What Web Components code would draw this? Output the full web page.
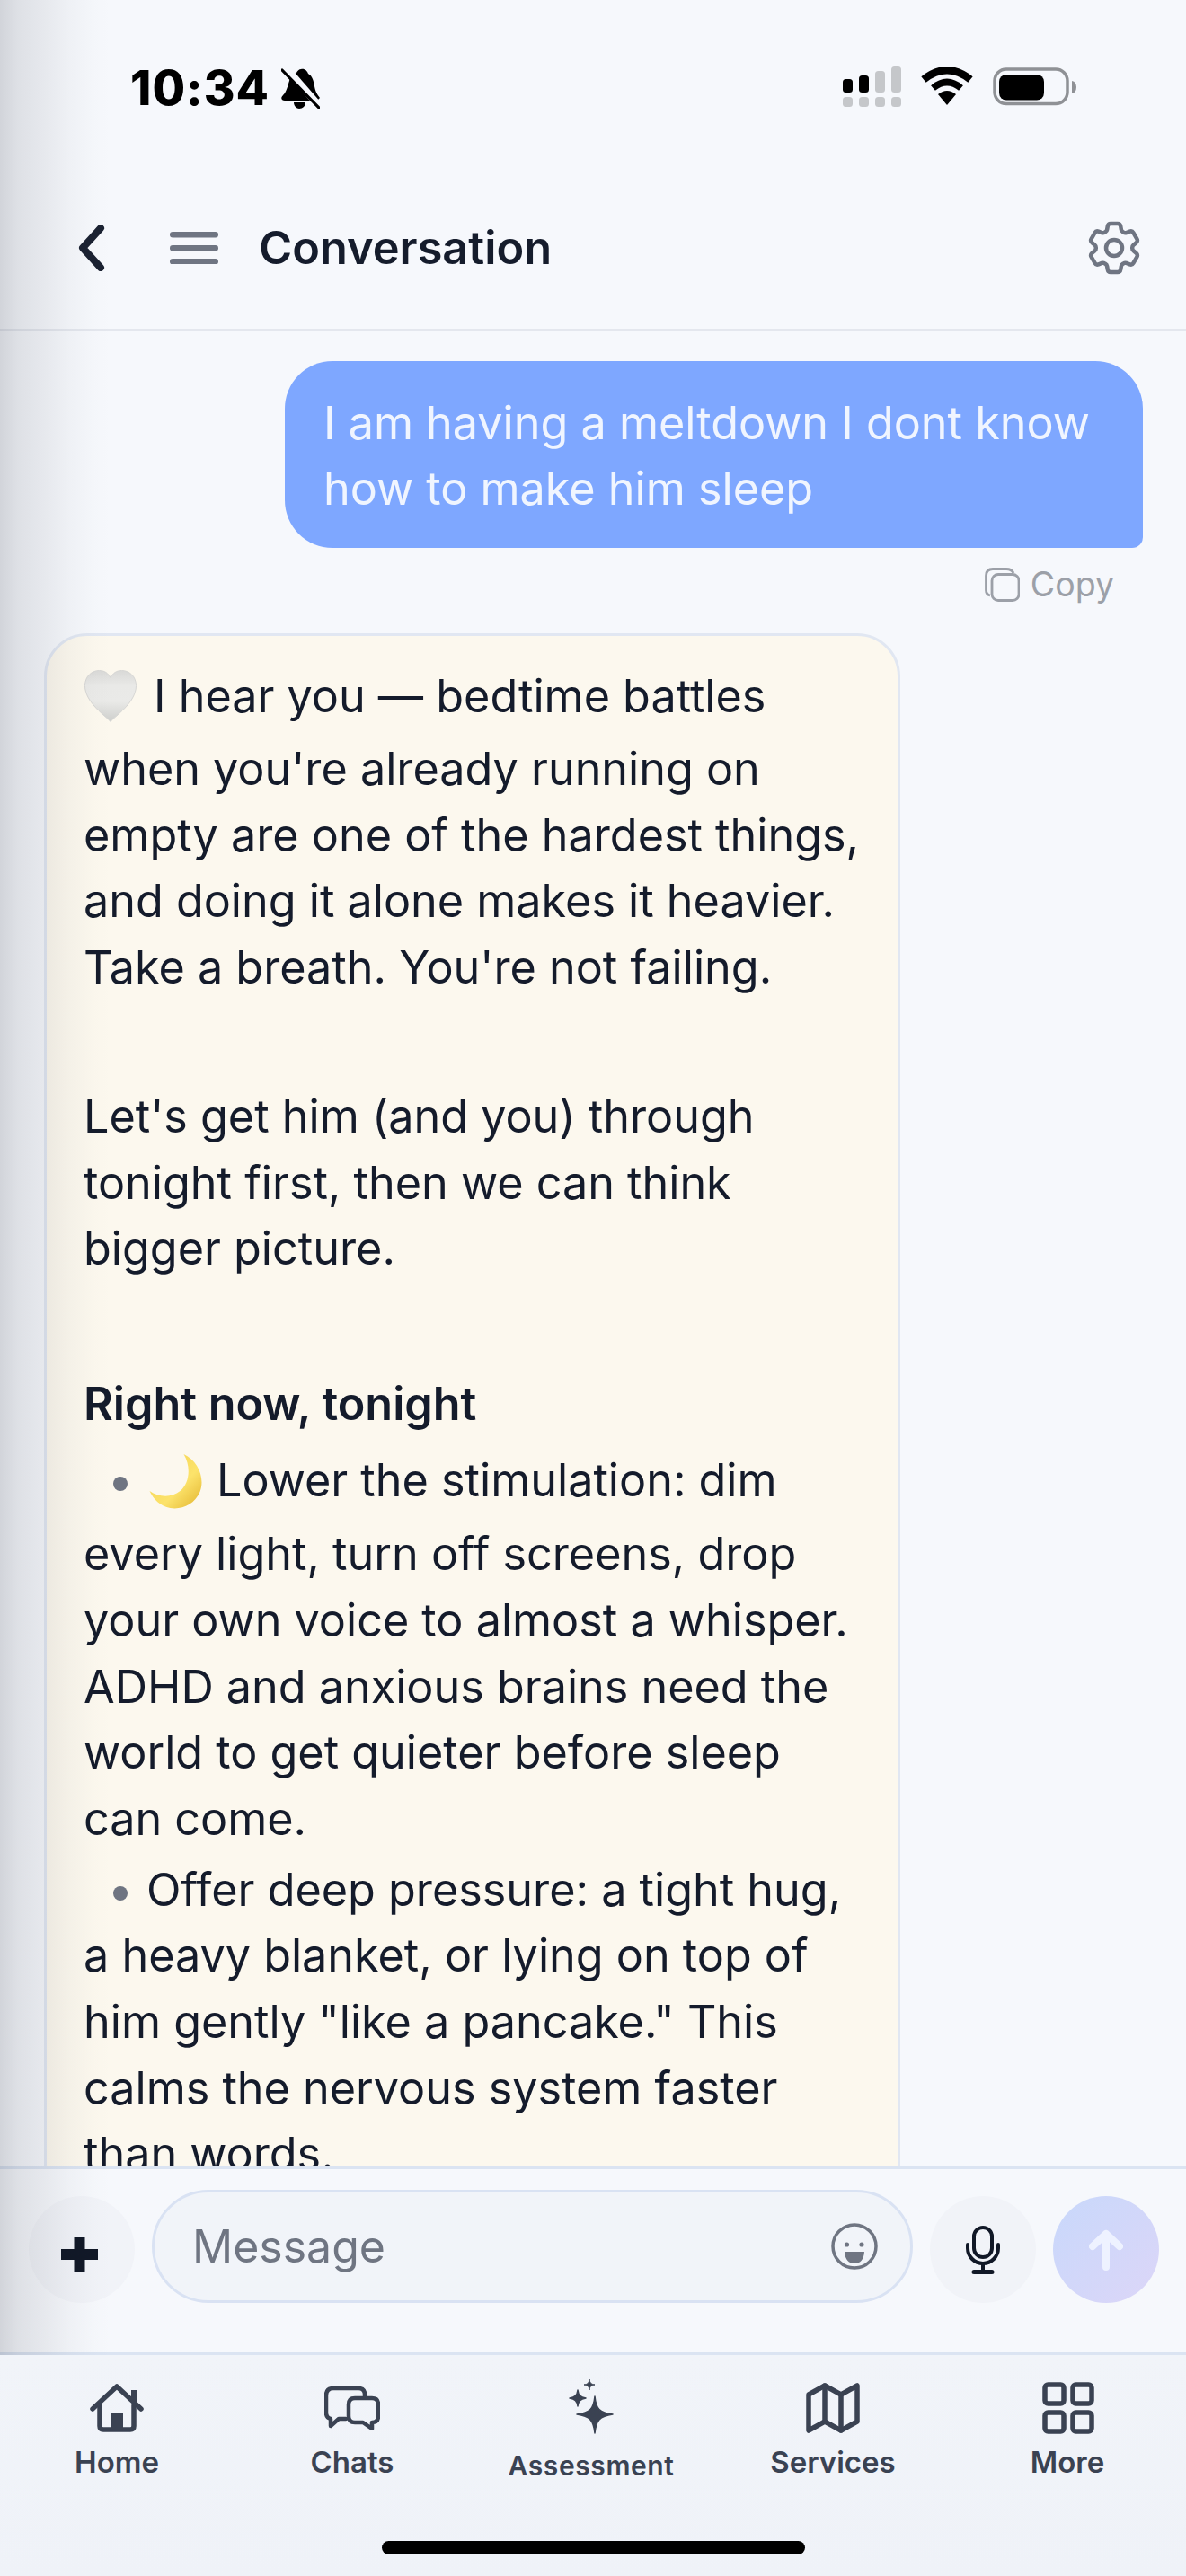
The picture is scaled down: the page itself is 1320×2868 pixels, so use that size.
<!DOCTYPE html>
<html lang="en">
<head>
<meta charset="utf-8">
<title>Conversation</title>
<style>
  html, body { margin: 0; padding: 0; background: #f6f8fc; }
  body { font-family: Inter, "Noto Sans", sans-serif; }
</style>
</head>
<body>
<app-shell>
  <status-bar></status-bar>
  <chat-header heading="Conversation"></chat-header>
  <chat-thread>
    <user-message>I am having a meltdown I dont know how to make him sleep</user-message>
    <copy-action></copy-action>
    <assistant-message>
      <msg-para class="lead"><svg class="emoji" width="58" height="58" viewBox="-.5 -.5 58 58" style="vertical-align:-26px;margin-bottom:15px;margin-left:1px;margin-right:19px"><defs><linearGradient id="hg" x1="0" y1="0" x2="0" y2="1"><stop offset="0" stop-color="#d9d9d7"/><stop offset=".3" stop-color="#e9e9e7"/><stop offset=".6" stop-color="#eaeae8"/><stop offset="1" stop-color="#cdcecb"/></linearGradient></defs><path d="M28.500 57C25 52 0 36 0 17C0 6 8 0 16 0C22 0 26 3 28.500 8C31 3 35 0 41 0C49 0 57 6 57 17C57 36 32 52 28.500 57Z" fill="url(#hg)" stroke="#d6d6d4" stroke-width="1"/></svg>I hear you — bedtime battles when you're already running on empty are one of the hardest things, and doing it alone makes it heavier. Take a breath. You're not failing.</msg-para>
      <msg-para style="margin-top:92px">Let's get him (and you) through tonight first, then we can think bigger picture.</msg-para>
      <msg-para style="margin-top:99px"><b>Right now, tonight</b></msg-para>
      <msg-item style="margin-top:11.500px"><svg width="60" height="61" viewBox="0 0 59 61" style="vertical-align:-27px;margin-bottom:13.500px;margin-left:3px;margin-right:15px"><defs><linearGradient id="mg" x1="0" y1="0" x2="1" y2="1"><stop offset="0" stop-color="#f3d04e"/><stop offset=".6" stop-color="#fce36b"/><stop offset="1" stop-color="#e2b32c"/></linearGradient></defs><path d="M38 0C54 7 62 27 56 42C50 56 36 62 23 60C12 58 4 50 0 41C10 48 24 49 34 41C45 32 46 13 38 0Z" fill="url(#mg)"/></svg>Lower the stimulation: dim every light, turn off screens, drop your own voice to almost a whisper. ADHD and anxious brains need the world to get quieter before sleep can come.</msg-item>
      <msg-item style="margin-top:5px">Offer deep pressure: a tight hug, a heavy blanket, or lying on top of him gently "like a pancake." This calms the nervous system faster than words.</msg-item>
    </assistant-message>
  </chat-thread>
  <message-composer></message-composer>
  <tab-bar>
    <tab-item label="Home"><svg width="60" height="54" viewBox="0 0 60 54" fill="none" stroke="#3a4252" stroke-width="5.500" stroke-linecap="round" stroke-linejoin="round"><path d="M3 28L30 3L57 28"/><path d="M49 7V20" stroke-width="6" stroke-linecap="butt"/><path d="M11 24V47Q11 51 15 51H45Q49 51 49 47V24"/><rect x="23" y="33" width="14" height="18" fill="#3a4252" stroke="none"/></svg></tab-item>
    <tab-item label="Chats"><svg width="62" height="49" viewBox="0 0 62 49" fill="none" stroke="#3a4252" stroke-width="4.500" stroke-linecap="round" stroke-linejoin="round"><path d="M45 11V9Q45 2 38 2H10Q2 2 2 10V29Q2 35 7 36V44L16 36H24"/><path d="M34 13H53Q60 13 60 20V33Q60 40 53 40V47L43 40H34Q27 40 27 33V20Q27 13 34 13Z"/></svg></tab-item>
    <tab-item label="Assessment" class="alt"><svg width="50" height="62" viewBox="0 0 50 62" fill="#3a4252" stroke="#3a4252" stroke-width="1.500" stroke-linejoin="round"><path d="M29 20C30.500 34 34 38 49 40C34 42 30.500 47 29 61C27.500 47 24 42 9 40C24 38 27.500 34 29 20Z"/><path d="M10 13C10.800 19 13 21 19 22C13 23 10.800 25 10 31C9.200 25 7 23 1 22C7 21 9.200 19 10 13Z" /><path d="M23 1C23.500 5 25 6.500 29 7C25 7.500 23.500 9 23 13C22.500 9 21 7.500 17 7C21 6.500 22.500 5 23 1Z" stroke-width="1"/></svg></tab-item>
    <tab-item label="Services"><svg width="60" height="56" viewBox="0 0 60 56" fill="none" stroke="#3a4252" stroke-width="5.500" stroke-linecap="round" stroke-linejoin="round"><path d="M3 13L21 3L39 13L57 3V43L39 53L21 43L3 53Z"/><path d="M21 3V43M39 13V53"/></svg></tab-item>
    <tab-item label="More"><svg width="58" height="58" viewBox="0 0 58 58" fill="none" stroke="#3a4252" stroke-width="5.500" stroke-linejoin="round" style="margin-left:2px"><rect x="3" y="3" width="21" height="21" rx="3.500"/><rect x="34" y="3" width="21" height="21" rx="3.500"/><rect x="3" y="34" width="21" height="21" rx="3.500"/><rect x="34" y="34" width="21" height="21" rx="3.500"/></svg></tab-item>
  </tab-bar>
</app-shell>
<script>
function define(name, css, html) {
  customElements.define(name, class extends HTMLElement {
    constructor() {
      super();
      const root = this.attachShadow({ mode: 'open' });
      const body = typeof html === 'function' ? html(this) : html;
      root.innerHTML = '<style>' + css + '</style>' + body;
    }
    connectedCallback() {
      if (typeof html === 'function') {
        const style = this.shadowRoot.querySelector('style').outerHTML;
        this.shadowRoot.innerHTML = style + html(this);
      }
    }
  });
}

define('app-shell', `
  :host { display:flex; flex-direction:column; position:relative; width:1320px; height:2868px; overflow:hidden;
          background:#f6f8fc; font-family:Inter,"Noto Sans",sans-serif; color:#141b2b; }
  .edge { position:absolute; left:0; top:0; width:125px; height:2622px; pointer-events:none;
          background:linear-gradient(90deg,rgba(20,25,40,.16) 0,rgba(20,25,40,.105) 20px,rgba(20,25,40,.07) 48px,rgba(20,25,40,.03) 78px,rgba(20,25,40,.008) 105px,rgba(20,25,40,0) 125px); }
`, `<slot></slot><div class="edge"></div>`);

define('status-bar', `
  :host { display:flex; align-items:flex-start; justify-content:space-between; height:189px; box-sizing:border-box; padding:74px 122px 0 145px; flex:none; }
  .left { display:flex; align-items:center; gap:13px; height:48px; }
  .time { font:800 53px/48px Inter,sans-serif; color:#000; letter-spacing:1px; }
  .right { display:flex; align-items:flex-start; gap:22px; }
  svg { display:block; }
`, `<div class="left"><span class="time">10:34</span>
  <svg width="43" height="45" viewBox="0 0 43 45"><path d="M22 1C26 0 29 3 30 6C35 9 36 14 37 20C38 26 40 29 43 33L40 36H4C0 36 -1 33 2 30C6 26 7 20 9 14C10 9 14 6 17 5C18 3 20 1 22 1Z" fill="#000"/><path d="M14 38H27C27 42 24 45 20 45C17 45 14 42 14 38Z" fill="#000"/><path d="M4 -2L44 44" stroke="#f6f8fc" stroke-width="8"/><path d="M1 2L42 44" stroke="#000" stroke-width="3.200" stroke-linecap="round"/></svg></div>
  <div class="right">
    <svg width="65" height="45" viewBox="0 0 65 45"><g fill="#000"><rect x="0" y="14" width="11" height="15" rx="3.500"/><rect x="18" y="10" width="11" height="19" rx="3.500"/></g><g fill="#c5c7ca"><rect x="36" y="5" width="11" height="24" rx="3.500"/><rect x="54" y="0" width="11" height="29" rx="3.500"/><rect x="0" y="34" width="11" height="11" rx="3.500"/><rect x="18" y="34" width="11" height="11" rx="3.500"/><rect x="36" y="34" width="11" height="11" rx="3.500"/><rect x="54" y="34" width="11" height="11" rx="3.500"/></g></svg>
    <svg width="58" height="43" viewBox="0 0 58 43" style="margin-top:1px"><path d="M29 42L19 30Q29 22 39 30Z" fill="#000"/><path d="M13.500 23Q29 10 44.500 23" fill="none" stroke="#000" stroke-width="7.500"/><path d="M3 13.500Q29 -7 55 13.500" fill="none" stroke="#000" stroke-width="8.500"/></svg>
    <svg width="93" height="43" viewBox="0 0 93 43" style="margin-top:1px"><rect x="2" y="2" width="81" height="38.500" rx="13" fill="none" stroke="#8f9195" stroke-width="3.500"/><rect x="7" y="8" width="50" height="28.500" rx="8" fill="#000"/><path d="M88 15Q93 16 93 22Q93 28 88 29Z" fill="#8f9195"/></svg>
  </div>`);

define('chat-header', `
  :host { display:flex; align-items:center; height:180px; box-sizing:border-box; flex:none; padding:0 44px 3px 87px; border-bottom:3px solid #e4e7ee; }
  h1 { margin:0 auto 0 45px; font:600 50.500px/60px Inter,sans-serif; color:#151c2c; }
  svg { display:block; flex:none; }
  .menu { margin-left:72px; }
`, el => `<svg width="30" height="52" viewBox="0 0 30 52" fill="none" stroke="#1b2232" stroke-width="8" stroke-linecap="round" stroke-linejoin="round"><path d="M25 4L5 26L25 48"/></svg>
  <svg class="menu" width="54" height="36" viewBox="0 0 54 36" fill="#6f7582"><rect y="0" width="54" height="6.500" rx="3.200"/><rect y="15" width="54" height="6.500" rx="3.200"/><rect y="30" width="54" height="6.500" rx="3.200"/></svg>
  <h1>${el.getAttribute('heading') || ''}</h1>
  <svg width="72" height="72" viewBox="0 0 24 24" fill="none" stroke="#6f7582" stroke-width="1.500" stroke-linejoin="round"><path d="M9.594 3.940c.09-.542.56-.94 1.110-.94h2.593c.55 0 1.020.398 1.110.94l.213 1.281c.063.374.313.686.645.870.074.040.147.083.22.127.325.196.72.257 1.075.124l1.217-.456a1.125 1.125 0 0 1 1.370.49l1.296 2.247a1.125 1.125 0 0 1-.26 1.431l-1.003.827c-.293.241-.438.613-.43.992a7.723 7.723 0 0 1 0 .255c-.008.378.137.75.43.991l1.004.827c.424.35.534.955.26 1.430l-1.298 2.247a1.125 1.125 0 0 1-1.369.491l-1.217-.456c-.355-.133-.75-.072-1.076.124a6.470 6.470 0 0 1-.22.128c-.331.183-.581.495-.644.869l-.213 1.281c-.09.543-.56.94-1.110.94h-2.594c-.55 0-1.019-.398-1.110-.94l-.213-1.281c-.062-.374-.312-.686-.644-.87a6.520 6.520 0 0 1-.22-.127c-.325-.196-.72-.257-1.076-.124l-1.217.456a1.125 1.125 0 0 1-1.369-.49l-1.297-2.247a1.125 1.125 0 0 1 .26-1.431l1.004-.827c.292-.24.437-.613.43-.991a6.932 6.932 0 0 1 0-.255c.007-.38-.138-.751-.43-.992l-1.004-.827a1.125 1.125 0 0 1-.26-1.430l1.297-2.247a1.125 1.125 0 0 1 1.370-.491l1.216.456c.356.133.751.072 1.076-.124.072-.044.146-.086.22-.128.332-.183.582-.495.644-.869l.214-1.280Z"/><circle cx="12" cy="12" r="3"/></svg>`);

define('chat-thread', `
  :host { display:block; flex:1 1 0; min-height:0; overflow:hidden; padding:33px 48px 0 49px; }
`, `<slot></slot>`);

define('user-message', `
  :host { display:block; box-sizing:border-box; width:955px; margin-left:auto; padding:32px 40px 30px 43px;
          background:#7ea7ff; color:#f0f5ff; border-radius:53px 53px 12px 53px; font:400 50.300px/73px Inter,sans-serif; }
`, `<slot></slot>`);

define('copy-action', `
  :host { display:flex; justify-content:flex-end; align-items:center; gap:12px; height:38px; margin-top:22px; padding-right:32px;
          color:#9ca0a8; font:400 37.500px/38px Inter,sans-serif; }
  svg { display:block; }
`, `<svg width="39" height="38" viewBox="0 0 39 38" fill="none" stroke="#9ca0a8" stroke-width="2.800"><path d="M6 31Q1.500 30 1.500 25V9Q1.500 1.500 9 1.500H24Q30 1.500 32 6"/><rect x="8" y="7.500" width="30" height="29" rx="7"/></svg><span>Copy</span>`);

define('assistant-message', `
  :host { display:block; box-sizing:border-box; width:953px; margin-top:35px; padding:30px 38px 120px 41px;
          background:#fcf8ee; border:3px solid #e1e7f2; border-radius:48px; color:#141b2b; font:400 50.300px/73.700px Inter,sans-serif; }
`, `<slot></slot>`);

define('msg-para', `
  :host { display:block; } ::slotted(b) { font-weight:600; }
`, `<slot></slot>`);

define('msg-item', `
  :host { display:block; }
  .dot { display:inline-block; width:16px; height:16px; border-radius:50%; background:#6f7582; margin:0 21px 0 33px; vertical-align:6px; }
`, `<span class="dot"></span><slot></slot>`);

define('message-composer', `
  :host { display:flex; align-items:flex-end; gap:19px; box-sizing:border-box; height:210px; flex:none; padding:0 30px 55px 32px;
          background:#f6f8fc; border-top:3px solid #dbe4f2; border-bottom:3px solid #dbe4f2; }
  .btn { flex:none; width:118px; height:119px; border-radius:50%; background:#f1f3f8; display:flex; align-items:center; justify-content:center; }
  .send { background:linear-gradient(135deg,#c8d8fb,#dcd6f8); }
  .field { flex:1; box-sizing:border-box; height:126px; border:3px solid #d9e2f3; border-radius:63px; background:#f1f4f9;
           display:flex; align-items:center; justify-content:space-between; padding:0 36px 0 42px; }
  .ph { font:400 50px/60px Inter,sans-serif; color:#6f7582; }
  svg { display:block; }
`, `<div class="btn"><svg width="41" height="38" viewBox="0 0 41 38" fill="#111827" style="margin:11px 5px 0 0"><path d="M14.500 0H26.500V13H41V25H26.500V38H14.500V25H0V13H14.500Z"/></svg></div>
  <div class="field"><span class="ph">Message</span>
    <svg width="52" height="52" viewBox="0 0 52 52"><circle cx="26" cy="26" r="24" fill="none" stroke="#6f7582" stroke-width="3.500"/><circle cx="17.500" cy="24" r="2.600" fill="#6f7582"/><circle cx="34" cy="24" r="2.600" fill="#6f7582"/><path d="M15 32H37Q36 45 26 45Q16 45 15 32Z" fill="#6f7582"/></svg></div>
  <div class="btn"><svg width="38" height="54" viewBox="0 0 38 54" fill="none" stroke="#111827" stroke-width="4" stroke-linecap="round"><rect x="9" y="2" width="20" height="33" rx="10"/><path d="M2 21V25A17 17 0 0 0 36 25V21"/><path d="M19 42V50"/><path d="M9 51.500H29" stroke-width="5"/></svg></div>
  <div class="btn send"><svg width="38" height="46" viewBox="0 0 38 46" fill="none" stroke="#eef2ff" stroke-width="8" stroke-linecap="round" stroke-linejoin="round"><path d="M19 42V5M4 19L19 5L34 19"/></svg></div>`);

define('tab-bar', `
  :host { display:block; flex:none; height:246px; background:linear-gradient(#f1f4f9,#eff2f8); position:relative; }
  .tabs { display:grid; grid-template-columns:260px 264px 268px 270px 252px; }
  .home { position:absolute; left:425px; top:207px; width:471px; height:15px; border-radius:8px; background:#000; }
`, `<div class="tabs"><slot></slot></div><div class="home"></div>`);

define('tab-item', `
  :host { display:flex; flex-direction:column; align-items:center; padding-top:29px; }
  :host(.alt) { padding-top:26px; }
  .icon { height:60px; display:flex; align-items:center; justify-content:center; }
  :host(.alt) .icon { height:62px; }
  span { display:block; margin-top:10px; font:600 33px/40px Inter,sans-serif; color:#3a4252; }
  :host(.alt) span { margin-top:15px; font-size:30px; letter-spacing:.6px; }
`, el => `<div class="icon"><slot></slot></div><span>${el.getAttribute('label') || ''}</span>`);
</script>
</body>
</html>
